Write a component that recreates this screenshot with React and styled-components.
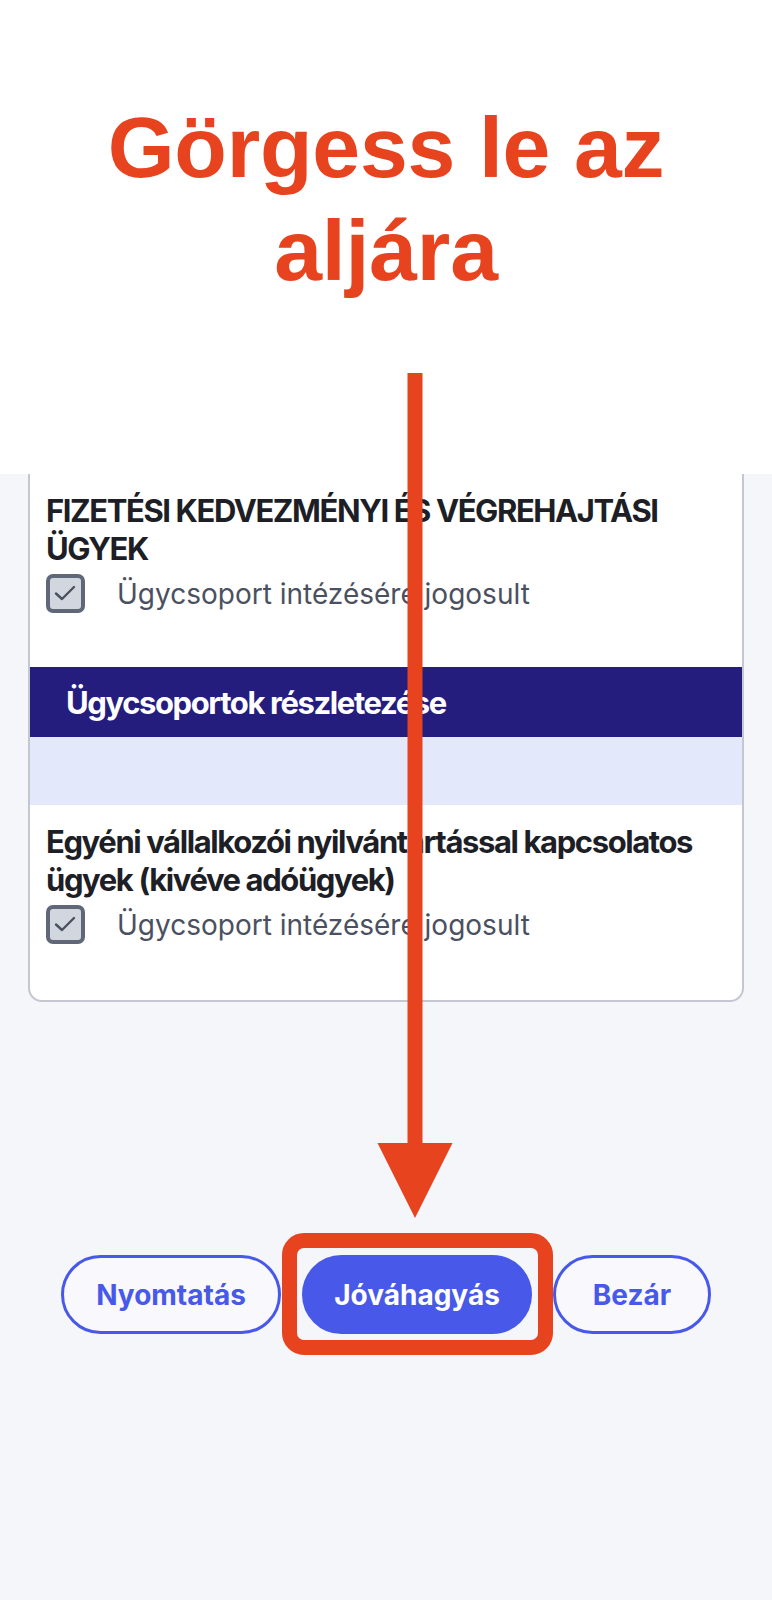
import React from 'react'
import styled, { createGlobalStyle } from 'styled-components';

const items = [
  { title: "FIZETÉSI KEDVEZMÉNYI ÉS VÉGREHAJTÁSI ÜGYEK" },
  { title: "Egyéni vállalkozói nyilvántartással kapcsolatos ügyek (kivéve adóügyek)" },
];

const Check = () => (
  <CheckBox>
    <svg width="31" height="31" viewBox="0 0 31 31">
      <path d="M6 15.5 L12 21 L24 9" fill="none" stroke="#4a5160" strokeWidth="2.4" strokeLinecap="round" strokeLinejoin="round" />
    </svg>
  </CheckBox>
);

const App = () => {
  return (
    <Page>
      <GlobalStyle />
      <Banner>
        <Headline>Görgess le az<br />aljára</Headline>
      </Banner>

      <Card>
        <Item>
          <ItemTitle>{items[0].title}</ItemTitle>
          <CheckRow>
            <Check />
            <Label>Ügycsoport intézésére jogosult</Label>
          </CheckRow>
        </Item>
        <Band>Ügycsoportok részletezése</Band>
        <SubBand />
        <Item last>
          <ItemTitle>{items[1].title}</ItemTitle>
          <CheckRow>
            <Check />
            <Label>Ügycsoport intézésére jogosult</Label>
          </CheckRow>
        </Item>
      </Card>

      <Actions>
        <Button w={220}>Nyomtatás</Button>
        <Highlight>
          <Button primary w={230}>Jóváhagyás</Button>
          <Frame />
        </Highlight>
        <Button w={158}>Bezár</Button>
      </Actions>

      <Arrow width="76" height="846" viewBox="0 0 76 846">
        <rect x="30.5" y="0" width="15" height="772" fill="#e8431f" />
        <polygon points="0.5,770 75.5,770 38,845" fill="#e8431f" />
      </Arrow>
    </Page>
  )
}

const GlobalStyle = createGlobalStyle`
body {
  margin: 0;
  background: #f5f6fa;
  font-family: "Inter", "Noto Sans", sans-serif;
}
`;

const Page = styled.div`
position: relative;
width: 772px;
min-height: 1600px;
background: #f5f6fa;
`;

const Banner = styled.div`
height: 474px;
background: #ffffff;
padding-top: 96px;
box-sizing: border-box;
text-align: center;
`;

const Headline = styled.h1`
margin: 0;
font-family: "Liberation Sans", Arial, sans-serif;
font-weight: 700;
font-size: 86px;
line-height: 103px;
letter-spacing: -0.2px;
color: #e8431f;
`;

const Card = styled.div`
margin: 0 28px;
background: #ffffff;
border: 2px solid #c4c7d0;
border-top: none;
border-radius: 0 0 14px 14px;
`;

const Item = styled.div`
padding: 18px 16px ${p => p.last ? '56px' : '54px'};
`;

const ItemTitle = styled.div`
font-size: 31px;
font-weight: 700;
line-height: 38px;
letter-spacing: -1.4px;
color: #1e1f26;
`;

const CheckRow = styled.div`
display: flex;
align-items: center;
gap: 32px;
margin-top: 6px;
`;

const CheckBox = styled.span`
flex: none;
width: 39px;
height: 39px;
box-sizing: border-box;
border: 4px solid #5f6778;
border-radius: 7px;
background: #d2d6de;
display: flex;
align-items: center;
justify-content: center;
`;

const Label = styled.span`
font-size: 28px;
color: #4b5060;
`;

const Band = styled.div`
height: 70px;
display: flex;
align-items: center;
padding-left: 36px;
background: #251d7e;
color: #ffffff;
font-size: 31px;
font-weight: 700;
letter-spacing: -1.4px;
`;

const SubBand = styled.div`
height: 68px;
background: #e3e9fb;
`;

const Actions = styled.div`
display: flex;
justify-content: center;
align-items: center;
gap: 21px;
margin-top: 253px;
`;

const Button = styled.button`
width: ${p => p.w}px;
height: 79px;
box-sizing: border-box;
border-radius: 40px;
border: 3px solid #4858e8;
background: ${p => p.primary ? '#4858e8' : '#f8f8fd'};
color: ${p => p.primary ? '#ffffff' : '#4858e8'};
font-family: "Inter", sans-serif;
font-size: 28px;
font-weight: 700;
cursor: pointer;
`;

const Highlight = styled.div`
position: relative;
display: flex;
`;

const Frame = styled.div`
position: absolute;
top: -22px;
bottom: -21px;
left: -20px;
right: -21px;
border: 15px solid #e8431f;
border-radius: 22px;
pointer-events: none;
`;

const Arrow = styled.svg`
position: absolute;
left: 377px;
top: 373px;
`;

export default App
